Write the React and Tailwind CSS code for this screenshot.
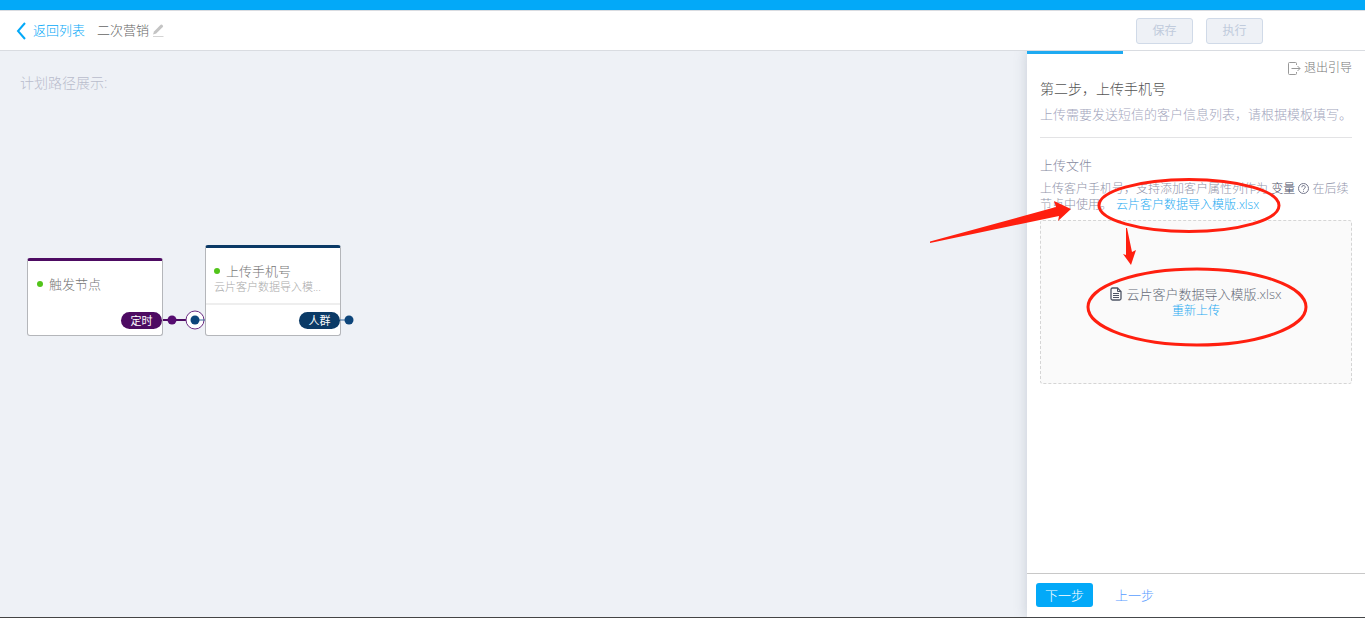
import { useState } from 'react';

function BackIcon() {
    return (
        <svg width="10" height="18" viewBox="0 0 10 18" fill="none" stroke="currentColor" strokeWidth="2" aria-hidden="true">
            <path d="M9 1 2 9l7 8" />
        </svg>
    );
}

function EditIcon() {
    return (
        <svg width="12" height="13" viewBox="0 0 12 13" aria-hidden="true">
            <path d="M1 10.5 2 7.4 8.7.8a1 1 0 0 1 1.400 0l.7.7a1 1 0 0 1 0 1.400L4.200 9.500Z" fill="#c4c4c4" />
            <path d="M1 12.500h10.500" stroke="#d4d4d4" />
        </svg>
    );
}

function ExitIcon() {
    return (
        <svg width="13" height="13" viewBox="0 0 13 13" fill="none" stroke="#999" aria-hidden="true">
            <path d="M8.500 3V1.500a1 1 0 0 0-1-1h-6a1 1 0 0 0-1 1v10a1 1 0 0 0 1 1h6a1 1 0 0 0 1-1V10" />
            <path d="M3.500 6.500h8.500M9.500 4l2.500 2.500L9.500 9" />
        </svg>
    );
}

function HelpIcon() {
    return (
        <svg width="11" height="11" viewBox="0 0 11 11" fill="none" stroke="#74778c" className="inline-block align-[-1px]" aria-hidden="true">
            <circle cx="5.500" cy="5.500" r="5" />
            <path d="M3.800 4.300a1.700 1.700 0 1 1 2.500 1.400q-.8.4-.8 1.200M5.500 7.800v1" />
        </svg>
    );
}

function FileIcon() {
    return (
        <svg width="12" height="14" viewBox="0 0 12 14" fill="none" stroke="#4f5566" aria-hidden="true">
            <path d="M7.500 1H2.500a1.500 1.500 0 0 0-1.500 1.500v9A1.500 1.500 0 0 0 2.500 13h7a1.500 1.500 0 0 0 1.500-1.500V4.500Z" strokeWidth="1.300" />
            <path d="M7.500 1v3.500H11" />
            <path d="M3 6.500h6M3 8.500h6M3 10.500h6" />
        </svg>
    );
}

// Hand-drawn marks pointing at the template link and the uploaded file
function GuideMarks() {
    return (
        <svg
            className="absolute top-0 left-0 overflow-visible pointer-events-none"
            width="338"
            height="320"
            viewBox="0 0 338 320"
            aria-hidden="true"
        >
            <g fill="none" stroke="#ff1f0f" strokeWidth="3">
                <ellipse cx="162" cy="154.500" rx="90" ry="26" />
                <ellipse cx="170" cy="256" rx="109" ry="38" />
            </g>
            <g fill="#ff1f0f">
                <path d="M-97 190.500 29 156l-2-6 17 8-13 12 1-5L-97 192Z" />
                <path d="M99 177h1l5 24 4-2-5 15-8-11 3 1Z" />
            </g>
        </svg>
    );
}

function StatusDot() {
    return <span className="w-[6px] h-[6px] rounded-full bg-[#52c41a] shrink-0" />;
}

function Canvas() {
    return (
        <section className="relative flex-1 min-w-0 overflow-hidden">
            <h2 className="px-5 pt-[22px] text-[14px] leading-5 text-[#b9bccc]">计划路径展示:</h2>

            <div className="absolute left-[27px] top-[207px] w-[136px] h-[78px] bg-white border border-[#b4b6ba] border-t-3 border-t-[#4d0b62] rounded-[3px]">
                <div className="flex items-center gap-[6px] pl-[9px] pt-[13px] text-[13px] leading-5 text-[#777]">
                    <StatusDot />
                    触发节点
                </div>
                <span className="absolute right-0 bottom-[6px] w-[41px] h-[17px] rounded-full bg-[#4d0b62] text-white text-[11px] leading-[17px] font-normal text-center">
                    定时
                </span>
            </div>

            <div className="absolute left-[205px] top-[194px] w-[136px] h-[91px] bg-white border border-[#b4b6ba] border-t-3 border-t-[#0b3a66] rounded-[3px]">
                <div className="h-[57px] border-b-2 border-[#eee] pl-2 pt-[13px]">
                    <div className="flex items-center gap-[6px] text-[13px] leading-5 text-[#777]">
                        <StatusDot />
                        上传手机号
                    </div>
                    <p className="text-[11px] leading-3 text-[#aaa]">云片客户数据导入模...</p>
                </div>
                <span className="absolute right-0 bottom-[6px] w-[41px] h-[17px] rounded-full bg-[#0b3a66] text-white text-[11px] leading-[17px] font-normal text-center">
                    人群
                </span>
            </div>

            <svg className="absolute left-[162px] top-[258px]" width="194" height="22" viewBox="0 0 194 22" fill="none" aria-hidden="true">
                <path d="M1 11h24" stroke="#4d0b62" strokeWidth="2" />
                <circle cx="10" cy="11" r="4.500" fill="#560d70" />
                <circle cx="33" cy="11" r="9" fill="#fff" stroke="#6b2c82" />
                <path d="M33 11h10M178 11h9" stroke="#37699a" />
                <circle cx="33" cy="11" r="4.500" fill="#0d457a" />
                <circle cx="187" cy="11" r="4.500" fill="#0d457a" />
            </svg>
        </section>
    );
}

function GuidePanel({ fileName }) {
    return (
        <aside className="relative w-[338px] shrink-0 flex flex-col bg-white shadow-[0_0_12px_rgba(80,95,120,0.25)]">
            <div className="w-24 h-[3px] bg-[#1eaaf1]" />

            <div className="flex-1 px-[13px]">
                <div className="flex justify-end pt-1">
                    <button type="button" className="flex items-center gap-[3px] text-[12px] leading-5 text-[#777]">
                        <ExitIcon />
                        退出引导
                    </button>
                </div>

                <h1 className="text-[14px] leading-[22px] text-[#555]">第二步，上传手机号</h1>
                <p className="pt-1 pb-[13px] text-[13px] leading-5 whitespace-nowrap text-[#a3a6bd] border-b border-[#e3e3e5]">
                    上传需要发送短信的客户信息列表，请根据模板填写。
                </p>

                <h2 className="pt-[17px] text-[13px] leading-5 text-[#878a9f]">上传文件</h2>
                <p className="pt-[6px] text-[12px] leading-4 text-[#9295ab]">
                    上传客户手机号，支持添加客户属性列作为 <span className="text-[#4c4f66]">变量</span> <HelpIcon /> 在后续节点中使用。
                    <a href="#template" className="ml-1 text-[#1eaaf1]">{fileName}</a>
                </p>

                <div className="mt-[7px] h-[164px] flex flex-col items-center justify-center bg-[#fafafa] border border-dashed border-[#d5d5d5] rounded-[3px]">
                    <div className="flex items-center gap-1 text-[13px] leading-[18px] text-[#666b78]">
                        <FileIcon />
                        {fileName}
                    </div>
                    <button type="button" className="text-[12px] leading-4 text-[#1eaaf1]">重新上传</button>
                </div>
            </div>

            <div className="flex items-start gap-[22px] h-11 px-[9px] pt-[9px] border-t border-[#c8c8c8] text-[13px] leading-6">
                <button type="button" className="w-[57px] h-6 rounded-[3px] bg-[#03a9f8] text-white">下一步</button>
                <button type="button" className="text-[#5a9cff]">上一步</button>
            </div>

            <GuideMarks />
        </aside>
    );
}

export default function App() {
    const [planName] = useState('二次营销');

    return (
        <div className="min-h-screen flex flex-col bg-[#eef1f6] border-b border-[#444] font-['Open_Sans','Noto_Sans_CJK_SC',sans-serif] font-light">
            <div className="h-[10px] bg-[#03a9f8]" />

            <header className="relative z-10 h-[41px] flex items-center justify-between bg-white border-y border-[#d9dce1] pl-4 pr-[102px] text-[13px]">
                <div className="flex items-center">
                    <a href="#list" className="flex items-center gap-[7px] text-[#03a9f8]">
                        <BackIcon />
                        返回列表
                    </a>
                    <span className="ml-3 text-[#666]">{planName}</span>
                    <button type="button" className="ml-[3px]" aria-label="编辑名称">
                        <EditIcon />
                    </button>
                </div>
                <div className="flex gap-[13px] text-[12px] font-normal">
                    <button type="button" disabled className="w-[57px] h-[26px] border border-[#d0dae8] rounded-[3px] bg-[#eef1f6] text-[#c0cbdc]">
                        保存
                    </button>
                    <button type="button" disabled className="w-[57px] h-[26px] border border-[#d0dae8] rounded-[3px] bg-[#eef1f6] text-[#c0cbdc]">
                        执行
                    </button>
                </div>
            </header>

            <main className="flex-1 flex">
                <Canvas />
                <GuidePanel fileName="云片客户数据导入模版.xlsx" />
            </main>
        </div>
    );
}
